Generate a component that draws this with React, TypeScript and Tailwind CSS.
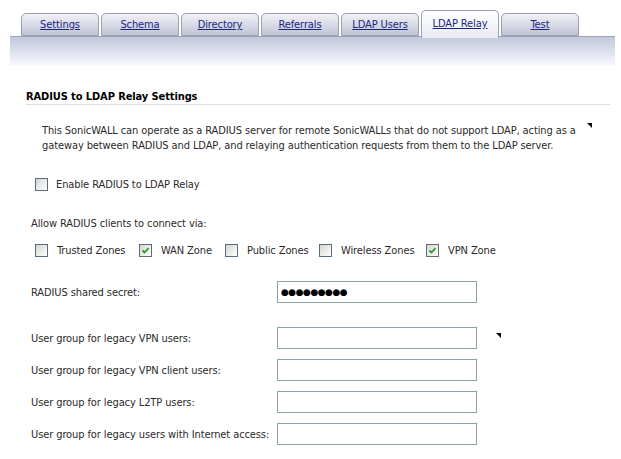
import React from "react";

const tabs = ["Settings", "Schema", "Directory", "Referrals", "LDAP Users", "LDAP Relay", "Test"];
const active = "LDAP Relay";

function Check({ checked = false }: { checked?: boolean }) {
  return (
    <span className="w-[13px] h-[13px] shrink-0 border border-[#5b6c7d] bg-linear-to-br from-[#d6d6d0] to-white flex items-center justify-center">
      {checked && (
        <svg width="9" height="9" viewBox="0 0 9 9">
          <path d="M1.5 4.5 L3.5 6.5 L7.5 2.2" fill="none" stroke="#22a022" strokeWidth="1.8" />
        </svg>
      )}
    </span>
  );
}

function Field({ children }: { children?: React.ReactNode }) {
  return (
    <div className="w-[200px] h-[22px] border border-[#8fa1a7] bg-white flex items-center pl-[3px] text-black">
      {children}
    </div>
  );
}

function Marker({ className }: { className: string }) {
  return (
    <svg className={"absolute " + className} width="5" height="5" viewBox="0 0 5 5">
      <polygon points="0,0 5,0 5,5" fill="#000" />
    </svg>
  );
}

const zones = [
  { label: "Trusted Zones", checked: false, w: "w-[104px]" },
  { label: "WAN Zone", checked: true, w: "w-[86px]" },
  { label: "Public Zones", checked: false, w: "w-[94px]" },
  { label: "Wireless Zones", checked: false, w: "w-[107px]" },
  { label: "VPN Zone", checked: true, w: "w-[90px]" },
];

const groups = [
  "User group for legacy VPN users:",
  "User group for legacy VPN client users:",
  "User group for legacy L2TP users:",
  "User group for legacy users with Internet access:",
];

export default function App() {
  return (
    <div className="w-[621px] h-[459px] bg-white relative overflow-hidden text-[11px] leading-[15px] tracking-[-0.1px] text-[#2a2a2a] font-['DejaVu_Sans_Condensed','Liberation_Sans',sans-serif]">
      {/* Tabs */}
      <div className="relative z-10 flex items-end gap-[2px] pl-[21px] pt-[10px] h-[38px]">
        {tabs.map((t) =>
          t === active ? (
            <div
              key={t}
              className="w-[78px] h-[28px] pb-[2px] border border-b-0 border-[#9aa2ad] rounded-t-[5px] bg-linear-to-b from-white to-[#e9ebf3] flex items-center justify-center"
            >
              <span className="underline text-[#1a2680]">{t}</span>
            </div>
          ) : (
            <div
              key={t}
              className="w-[78px] h-[23px] mb-[2px] border border-[#9aa2ad] rounded-t-[5px] bg-linear-to-b from-[#f2f2f5] to-[#bfc4d6] flex items-center justify-center"
            >
              <span className="underline text-[#1a2680]">{t}</span>
            </div>
          )
        )}
      </div>
      <div className="-mt-[2px] ml-[10px] w-[605px] h-[29px] border-t border-[#9ca4b4] bg-linear-to-b from-[#c2c8de] to-[#f7f8fb]" />

      {/* Content */}
      <div className="pl-[26px]">
        <div className="mt-[25px] w-[584px] h-[15px] border-b border-[#dcdcdc] font-bold text-black leading-[14px]">
          RADIUS to LDAP Relay Settings
        </div>

        <div className="mt-[18px] ml-[16px] whitespace-nowrap">
          <div>This SonicWALL can operate as a RADIUS server for remote SonicWALLs that do not support LDAP, acting as a</div>
          <div>gateway between RADIUS and LDAP, and relaying authentication requests from them to the LDAP server.</div>
        </div>

        <div className="mt-[24px] ml-[9px] flex items-center gap-[8px] h-[15px]">
          <Check />
          <span>Enable RADIUS to LDAP Relay</span>
        </div>

        <div className="mt-[24px] ml-[5px] h-[15px]">Allow RADIUS clients to connect via:</div>

        <div className="mt-[12px] ml-[9px] flex items-center h-[15px]">
          {zones.map((z) => (
            <div key={z.label} className={"flex items-center gap-[9px] " + z.w}>
              <Check checked={z.checked} />
              <span className="whitespace-nowrap">{z.label}</span>
            </div>
          ))}
        </div>

        <div className="mt-[23px] ml-[5px] flex items-center">
          <span className="w-[246px]">RADIUS shared secret:</span>
          <Field>
            <span className="text-[9px] leading-[9px] font-['DejaVu_Sans',sans-serif] tracking-[-0.5px]">●●●●●●●●●</span>
          </Field>
        </div>

        <div className="mt-[24px] ml-[5px] flex flex-col gap-[10px]">
          {groups.map((g) => (
            <div key={g} className="flex items-center">
              <span className="w-[246px] whitespace-nowrap">{g}</span>
              <Field />
            </div>
          ))}
        </div>
      </div>

      <Marker className="left-[587px] top-[123px]" />
      <Marker className="left-[496px] top-[333px]" />
    </div>
  );
}
